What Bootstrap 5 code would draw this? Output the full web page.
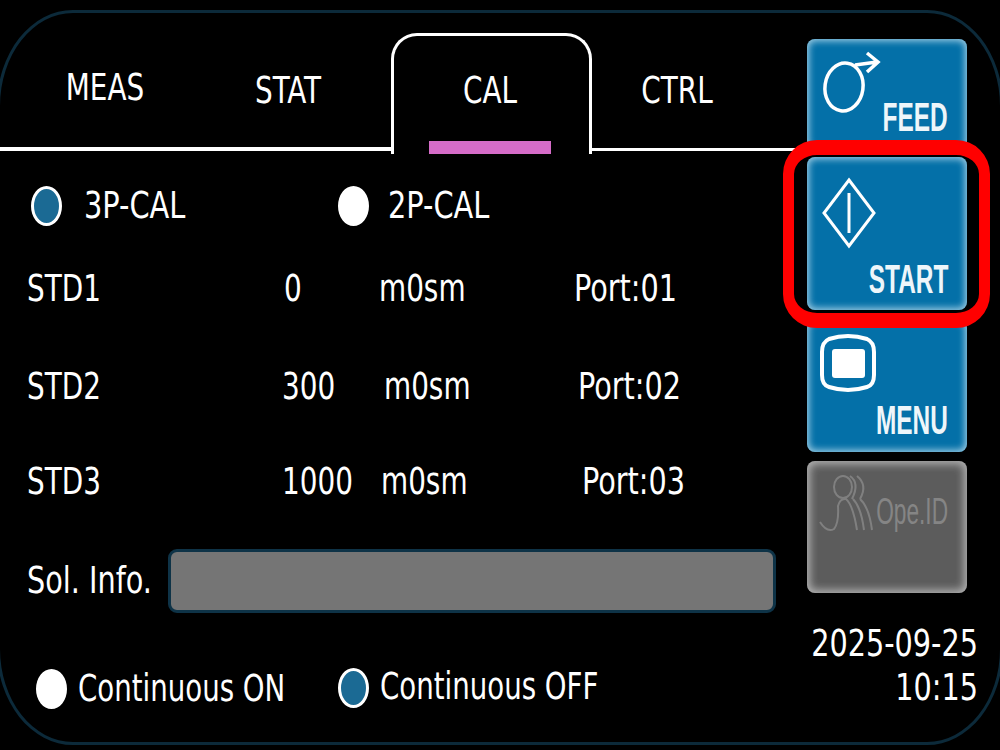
<!DOCTYPE html>
<html lang="en">
<head>
    <meta charset="UTF-8">
    <meta name="viewport" content="width=device-width, initial-scale=1.0">
    <title>CAL</title>
    <link href="https://cdn.jsdelivr.net/npm/bootstrap@5.3.0/dist/css/bootstrap.min.css" rel="stylesheet">
    <style>
        body { background: #000; color: #fff; width: 1000px; height: 750px; overflow: hidden; position: relative; }
        .screen-frame { position: absolute; left: -3px; right: -3px; top: 10px; height: 735px; border: 3px solid #0c2a3a; border-radius: 76px / 96px; pointer-events: none; }
        .screen-wrap { width: 1000px; height: 750px; }
        .main-col { width: 800px; }
        .lbl { display: inline-block; font-family: "DejaVu Sans Condensed", "DejaVu Sans", sans-serif; font-stretch: condensed; font-size: 38px; line-height: 44px; white-space: nowrap; transform: scaleX(.815); transform-origin: left center; }
        .lbl.wide { transform: scaleX(.84); }

        /* tabs */
        .tab-bar { margin-top: 33px; height: 121px; align-items: stretch; }
        .tab-cell { height: 118px; border-bottom: 4px solid #fff; position: relative; }
        .tab-cell .lbl { position: absolute; top: 32px; transform-origin: center; left: 50%; translate: -50% 0; }
        .tab-meas { width: 190px; }
        .tab-meas .lbl { top: 32px; left: 55%; }
        .tab-stat { width: 201px; }
        .tab-stat .lbl { top: 35px; left: 49%; }
        .tab-cal { width: 201px; height: 121px; border: 3px solid #fff; border-bottom: 0; border-radius: 26px 26px 0 0; background: #000; }
        .tab-cal .lbl { top: 32px; left: 49%; }
        .tab-ctrl { width: 208px; border-bottom-width: 3px; }
        .tab-ctrl .lbl { top: 35px; left: 41%; }
        .tab-mark { position: absolute; left: 35px; width: 122px; top: 105px; height: 13px; background: #d56cc8; }

        /* radios */
        .dot { display: inline-block; flex: none; width: 31px; height: 40px; border-radius: 50%; background: #fff; border: 3px solid #fff; }
        .dot.on { background: #1b6a94; }
        .cal-mode { margin-top: 32px; height: 40px; padding-left: 31px; }
        .cal-mode .lbl { font-size: 37px; transform: scaleX(.866); }
        .gap-a { width: 22px; }
        .gap-b { width: 137px; }
        .gap-c { width: 19px; }

        /* std rows */
        .std-row { padding-left: 27px; height: 44px; }
        .std-row .w-name { width: 255px; }
        .r1 { margin-top: 40px; }
        .r2 { margin-top: 54px; }
        .r3 { margin-top: 51px; }
        .r1 .w-val { width: 97px; padding-left: 2px; } .r1 .w-unit { width: 195px; }
        .r2 .w-val { width: 102px; } .r2 .w-unit { width: 194px; }
        .r3 .w-val { width: 99px; } .r3 .w-unit { width: 201px; }

        .sol-row { margin-top: 46px; padding-left: 27px; height: 64px; }
        .sol-name { width: 141px; margin-top: -2px; }
        .sol-box { width: 608px; height: 64px; background: #757575; border: 3px solid #0e3347; border-radius: 9px; }

        .cont-row { margin-top: 54px; padding-left: 36px; height: 44px; }
        .cont-row .lbl { font-size: 37px; transform: scaleX(.83); }
        .cont-row .cont-off { margin-left: 10px; margin-top: -2px; }
        .cont-row .lbl-off { margin-top: -4px; }
        .gap-d { width: 11px; }
        .gap-f { width: 11px; }

        /* right side buttons */
        .side-col { width: 200px; padding: 39px 0 0 7px; }
        .hw-btn { width: 160px; border-radius: 8px; background: #0470a8; box-shadow: inset 0 0 7px 2px rgba(210,235,245,.75); position: relative; }
        .hw-btn svg { position: absolute; left: 0; top: 0; }
        .hw-label { position: absolute; right: 19px; font-family: "Liberation Sans", Arial, sans-serif; font-weight: 700; font-size: 40px; line-height: 1; transform: scaleX(.61); transform-origin: right center; color: #eef6fa; }
        .b-feed { height: 111px; }
        .b-feed .hw-label { top: 58px; }
        .b-start { height: 153px; margin-top: 7px; }
        .b-start .hw-label { top: 102px; }
        .b-menu { height: 132px; margin-top: 10px; }
        .b-menu .hw-label { top: 80px; }
        .b-ope { height: 132px; margin-top: 9px; background: #5c5c5c; box-shadow: inset 0 0 8px 3px rgba(215,215,215,.7); }
        .b-ope .hw-label { top: 33px; right: 19px; font-weight: 400; font-size: 36px; transform: scaleX(.63); color: #858585; }
        .clock { width: 200px; margin: 28px 0 0 -29px; text-align: right; }
        .clock .lbl { display: block; transform-origin: right center; transform: scaleX(.84); }
        .red-ring { position: absolute; left: 783px; top: 140px; width: 207px; height: 188px; border-style: solid; border-color: #f00; border-width: 15px 11px; border-radius: 34px; }
    </style>
</head>
<body>
    <div class="d-flex screen-wrap">
        <div class="main-col">
            <div class="d-flex tab-bar">
                <div class="tab-cell tab-meas"><span class="lbl">MEAS</span></div>
                <div class="tab-cell tab-stat"><span class="lbl">STAT</span></div>
                <div class="tab-cell tab-cal"><span class="lbl">CAL</span><span class="tab-mark"></span></div>
                <div class="tab-cell tab-ctrl"><span class="lbl">CTRL</span></div>
            </div>

            <div class="d-flex align-items-center cal-mode">
                <span class="dot on"></span><span class="gap-a"></span><span class="lbl">3P-CAL</span>
                <span class="gap-b"></span>
                <span class="dot"></span><span class="gap-c"></span><span class="lbl">2P-CAL</span>
            </div>

            <div class="d-flex std-row r1">
                <div class="w-name"><span class="lbl">STD1</span></div>
                <div class="w-val"><span class="lbl">0</span></div>
                <div class="w-unit"><span class="lbl">m0sm</span></div>
                <div><span class="lbl wide">Port:01</span></div>
            </div>
            <div class="d-flex std-row r2">
                <div class="w-name"><span class="lbl">STD2</span></div>
                <div class="w-val"><span class="lbl">300</span></div>
                <div class="w-unit"><span class="lbl">m0sm</span></div>
                <div><span class="lbl wide">Port:02</span></div>
            </div>
            <div class="d-flex std-row r3">
                <div class="w-name"><span class="lbl">STD3</span></div>
                <div class="w-val"><span class="lbl">1000</span></div>
                <div class="w-unit"><span class="lbl">m0sm</span></div>
                <div><span class="lbl wide">Port:03</span></div>
            </div>

            <div class="d-flex align-items-center sol-row">
                <div class="sol-name"><span class="lbl wide">Sol. Info.</span></div>
                <div class="sol-box"></div>
            </div>

            <div class="d-flex align-items-center cont-row">
                <span class="dot"></span><span class="gap-d"></span><span class="lbl">Continuous ON</span>
                <span class="dot on cont-off"></span><span class="gap-f"></span><span class="lbl lbl-off">Continuous OFF</span>
            </div>
        </div>

        <div class="side-col">
            <div class="hw-btn b-feed">
                <svg width="90" height="80" viewBox="0 0 90 80" fill="none" stroke="#fff" stroke-width="3.5">
                    <ellipse cx="37" cy="48" rx="19" ry="24" transform="rotate(8 37 48)"/>
                    <path d="M48 26 L70 23 M60 14 L71 23 L60 33"/>
                </svg>
                <span class="hw-label">FEED</span>
            </div>
            <div class="hw-btn b-start">
                <svg width="90" height="100" viewBox="0 0 90 100" fill="none" stroke="#fff" stroke-width="3">
                    <path d="M42 23 L67 56 L42 89 L17 56 Z"/>
                    <path d="M42 36 V76"/>
                </svg>
                <span class="hw-label">START</span>
            </div>
            <div class="hw-btn b-menu">
                <svg width="90" height="80" viewBox="0 0 90 80" fill="none" stroke="#fff" stroke-width="4">
                    <path d="M22 19 Q41 13 60 19 Q67 22 67 32 V55 Q67 65 60 67 Q41 73 22 67 Q15 65 15 55 V32 Q15 22 22 19 Z"/>
                    <rect x="25" y="29" width="33" height="29" rx="3" fill="#fff" stroke="none"/>
                </svg>
                <span class="hw-label">MENU</span>
            </div>
            <div class="hw-btn b-ope">
                <svg width="80" height="80" viewBox="0 0 80 80" fill="none" stroke="#808080" stroke-width="2">
                    <ellipse cx="36" cy="26" rx="9" ry="11"/>
                    <path d="M43 15 Q53 22 45 38 M50 15 Q61 24 53 38"/>
                    <path d="M13 61 Q20 72 27 68 Q32 62 31 45 Q33 37 39 38 Q46 44 50 69 M46 38 Q54 46 57 69 M53 38 Q62 46 65 69"/>
                </svg>
                <span class="hw-label">Ope.ID</span>
            </div>
            <div class="clock">
                <span class="lbl">2025-09-25</span>
                <span class="lbl">10:15</span>
            </div>
        </div>
    </div>
    <div class="screen-frame"></div>
    <div class="red-ring"></div>
</body>
</html>
